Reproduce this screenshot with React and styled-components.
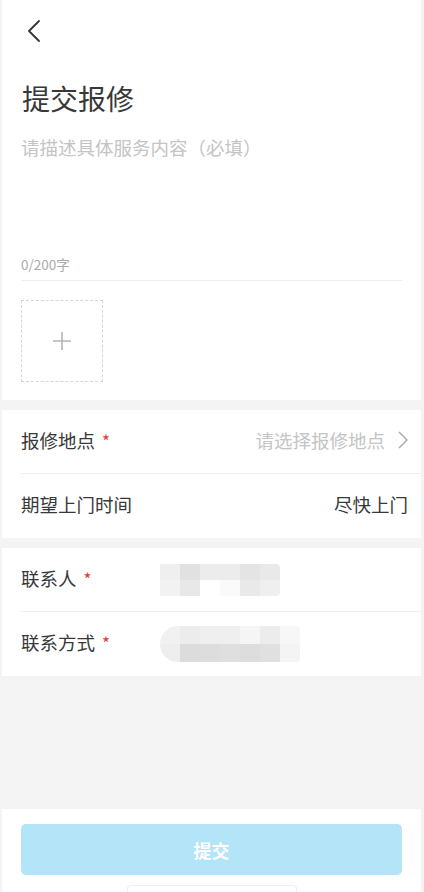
import React from 'react'
import styled, { createGlobalStyle } from 'styled-components'

const GlobalStyle = createGlobalStyle`
  html, body {
    margin: 0;
    padding: 0;
    background: #f4f4f4;
  }
  body {
    font-family: "Noto Sans CJK SC", "Noto Sans", sans-serif;
    color: #333;
  }
`

const Page = styled.div`
  display: flex;
  flex-direction: column;
  min-height: 892px;
  padding: 0 3px 0 2px;
  box-sizing: border-box;
  background: #f4f4f4;
`
const Card = styled.div`
  background: #fff;
  margin-bottom: ${props => props.gap || 0}px;
`
const TopBar = styled.div`
  height: 62px;
  display: flex;
  align-items: center;
  padding-left: 24px;
`
const Title = styled.div`
  font-size: 28px;
  line-height: 36px;
  padding: 18px 0 0 20px;
  color: #383838;
`
const Describe = styled.div`
  height: 165px;
  margin: 0 19px;
  padding-top: 18px;
  box-sizing: border-box;
  display: flex;
  flex-direction: column;
  justify-content: space-between;
  border-bottom: 1px solid #eeeeee;
`
const Placeholder = styled.div`
  font-size: 18.5px;
  line-height: 26px;
  color: #c4c4c4;
`
const Counter = styled.div`
  font-size: 13.5px;
  line-height: 18px;
  color: #aaa;
  padding-bottom: 7px;
`
const Upload = styled.div`
  width: 80px;
  height: 80px;
  margin: 19px 0 18px 19px;
  border: 1px dashed #d6d6d6;
  display: flex;
  align-items: center;
  justify-content: center;
`
const Row = styled.div`
  height: 64px;
  margin-left: 19px;
  padding: 0 13px 4px 0;
  display: flex;
  align-items: center;
  border-bottom: ${props => props.last ? 'none' : '1px solid #f0f0f0'};
  box-sizing: border-box;
`
const Label = styled.div`
  font-size: 18.5px;
  color: #383838;
  width: 139px;
  flex-shrink: 0;
`
const Star = styled.span`
  color: #e53935;
  margin-left: 7px;
  font-size: 17px;
`
const Value = styled.div`
  flex: 1;
  display: flex;
  justify-content: flex-end;
  align-items: center;
  gap: 13px;
  font-size: 18.5px;
  color: ${props => props.muted ? '#c4c4c4' : '#383838'};
`
const Mosaic = styled.div`
  display: grid;
  grid-template-columns: repeat(${props => props.cols}, 20px);
  grid-auto-rows: ${props => props.rowH}px;
  margin-top: 4px;
  border-radius: ${props => props.round ? '18px 4px 4px 18px' : '0 4px 4px 0'};
  overflow: hidden;
  filter: blur(0.4px);
`
const Cell = styled.div`
  background: ${props => props.c};
`
const Filler = styled.div`
  flex: 1;
`
const Footer = styled.div`
  background: #fff;
  height: 83px;
  padding: 15px 19px 0;
  box-sizing: border-box;
  display: flex;
  flex-direction: column;
  align-items: center;
`
const SubmitButton = styled.button`
  width: 100%;
  height: 54px;
  border: none;
  border-radius: 5px;
  background: #b3e4f8;
  color: #fff;
  font-family: inherit;
  font-size: 18px;
  font-weight: 700;
`
const HomeBar = styled.div`
  width: 168px;
  height: 6px;
  margin-top: 10px;
  border: 1px solid #eeeeee;
  border-bottom: none;
  border-radius: 4px 4px 0 0;
`

const nameCells = ['#efefef', '#e1e1e1', '#ececec', '#ececec', '#e4e4e4', '#e9e9e9',
  '#f2f2f2', '#e8e8e8', '#ffffff', '#fafafa', '#e9e9e9', '#efefef']
const phoneCells = ['#f1f1f1', '#ececec', '#efefef', '#efefef', '#f5f5f5', '#ececec', '#f7f7f7',
  '#eeeeee', '#dcdcdc', '#dddddd', '#dfdfdf', '#dddddd', '#e0e0e0', '#f4f4f4']

export default function App() {
  return (
    <>
      <GlobalStyle />
      <Page>
        <Card gap={10}>
          <TopBar>
            <svg width="16" height="24" viewBox="0 0 16 24" fill="none">
              <polyline points="13,2 3,12 13,22" stroke="#333" strokeWidth="1.8" strokeLinecap="round" strokeLinejoin="round" />
            </svg>
          </TopBar>
          <Title>提交报修</Title>
          <Describe>
            <Placeholder>请描述具体服务内容（必填）</Placeholder>
            <Counter>0/200字</Counter>
          </Describe>
          <Upload>
            <svg width="20" height="20" viewBox="0 0 20 20">
              <path d="M10 1v18M1 10h18" stroke="#b5b5b5" strokeWidth="1.6" />
            </svg>
          </Upload>
        </Card>

        <Card gap={10}>
          <Row>
            <Label>报修地点<Star>*</Star></Label>
            <Value muted>
              请选择报修地点
              <svg width="10" height="18" viewBox="0 0 10 18" fill="none">
                <polyline points="1,1 9,9 1,17" stroke="#aaa" strokeWidth="1.5" strokeLinejoin="round" />
              </svg>
            </Value>
          </Row>
          <Row last>
            <Label>期望上门时间</Label>
            <Value>尽快上门</Value>
          </Row>
        </Card>

        <Card>
          <Row>
            <Label>联系人<Star>*</Star></Label>
            <Mosaic cols={6} rowH={16}>
              {nameCells.map((c, i) => <Cell key={i} c={c} />)}
            </Mosaic>
          </Row>
          <Row last>
            <Label>联系方式<Star>*</Star></Label>
            <Mosaic cols={7} rowH={18} round>
              {phoneCells.map((c, i) => <Cell key={i} c={c} />)}
            </Mosaic>
          </Row>
        </Card>

        <Filler />

        <Footer>
          <SubmitButton>提交</SubmitButton>
          <HomeBar />
        </Footer>
      </Page>
    </>
  )
}
